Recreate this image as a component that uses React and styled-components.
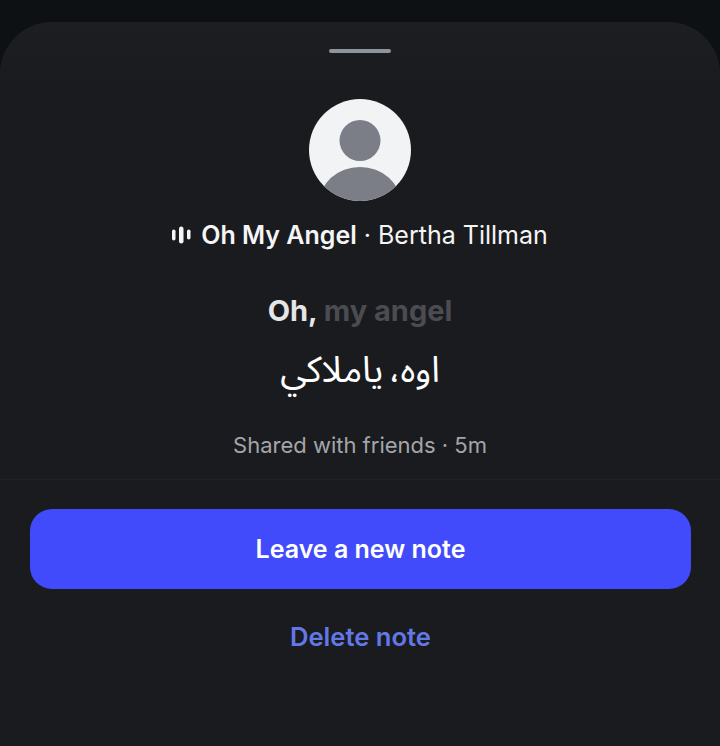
import styled, { createGlobalStyle } from "styled-components";

const GlobalStyle = createGlobalStyle`
  html, body {
    margin: 0;
    padding: 0;
    background: #0e1114;
  }
  body {
    font-family: "Inter", "Liberation Sans", sans-serif;
  }
`;

const App = () => {
  return (
    <>
      <GlobalStyle />
      <Page>
        <Sheet>
          <Handle />
          <Avatar>
            <svg viewBox="0 0 102 102" width="102" height="102">
              <circle cx="51" cy="41.5" r="20.5" fill="#7b7e87" />
              <ellipse cx="51" cy="105" rx="41" ry="37" fill="#7b7e87" />
            </svg>
          </Avatar>
          <Track>
            <Bars width="19" height="18" viewBox="0 0 19 18">
              <rect x="0" y="3.5" width="3.5" height="11" rx="1.75" />
              <rect x="7" y="0.5" width="4.5" height="17" rx="2.25" />
              <rect x="15" y="3.5" width="3.5" height="10" rx="1.75" />
            </Bars>
            <Song>Oh My Angel</Song>
            <Artist>· Bertha Tillman</Artist>
          </Track>
          <Lyric>
            Oh, <Dim>my angel</Dim>
          </Lyric>
          <Translation dir="rtl">اوه، ياملاكي</Translation>
          <Meta>Shared with friends · 5m</Meta>
          <Divider />
          <Actions>
            <Primary>Leave a new note</Primary>
            <Danger>Delete note</Danger>
          </Actions>
        </Sheet>
      </Page>
    </>
  );
};

const Page = styled.div`
  width: 720px;
  height: 746px;
  padding-top: 22px;
  box-sizing: border-box;
  overflow: hidden;
  background: #0e1114;
`;

const Sheet = styled.div`
  height: 724px;
  display: flex;
  flex-direction: column;
  align-items: center;
  background: linear-gradient(#1c1e21, #1a1b1f 70px);
  border-radius: 52px 52px 0 0;
`;

const Handle = styled.div`
  width: 62px;
  height: 4px;
  margin-top: 27px;
  border-radius: 2px;
  background: #8f939c;
`;

const Avatar = styled.div`
  width: 102px;
  height: 102px;
  margin-top: 46px;
  border-radius: 50%;
  overflow: hidden;
  background: #f2f3f5;

  svg {
    display: block;
  }
`;

const Track = styled.div`
  display: flex;
  align-items: center;
  height: 30px;
  margin-top: 19px;
  color: #f5f5f6;
  font-size: 25px;
  line-height: 30px;
`;

const Bars = styled.svg`
  margin-right: 10px;
  fill: #f5f5f6;
`;

const Song = styled.span`
  font-weight: 600;
  margin-right: 7px;
`;

const Artist = styled.span`
  font-weight: 400;
`;

const Lyric = styled.div`
  margin-top: 44px;
  color: #e6e6e8;
  font-size: 29px;
  line-height: 34px;
  font-weight: 700;
  white-space: pre-wrap;
`;

const Dim = styled.span`
  color: #4b4c51;
`;

const Translation = styled.div`
  margin-top: 21px;
  color: #ffffff;
  font-family: "Noto Sans Arabic", "DejaVu Sans", sans-serif;
  font-size: 36px;
  line-height: 44px;
  word-spacing: -4px;
`;

const Meta = styled.div`
  margin-top: 38px;
  color: #a4a5a9;
  font-size: 22px;
  line-height: 28px;
`;

const Divider = styled.div`
  align-self: stretch;
  height: 1px;
  margin-top: 20px;
  background: #202225;
`;

const Actions = styled.div`
  align-self: stretch;
  display: flex;
  flex-direction: column;
  align-items: center;
  padding: 28.5px 29px 0 30px;
  background: #191b1f;
  flex: 1;
`;

const Primary = styled.button`
  width: 100%;
  height: 80px;
  border: none;
  border-radius: 22px;
  background: #414bfb;
  color: #ffffff;
  font-family: inherit;
  font-size: 25px;
  font-weight: 600;
`;

const Danger = styled.button`
  margin-top: 32.5px;
  padding: 0;
  border: none;
  background: none;
  color: #6378e6;
  font-family: inherit;
  font-size: 25.6px;
  line-height: 32px;
  font-weight: 600;
`;

export default App;
